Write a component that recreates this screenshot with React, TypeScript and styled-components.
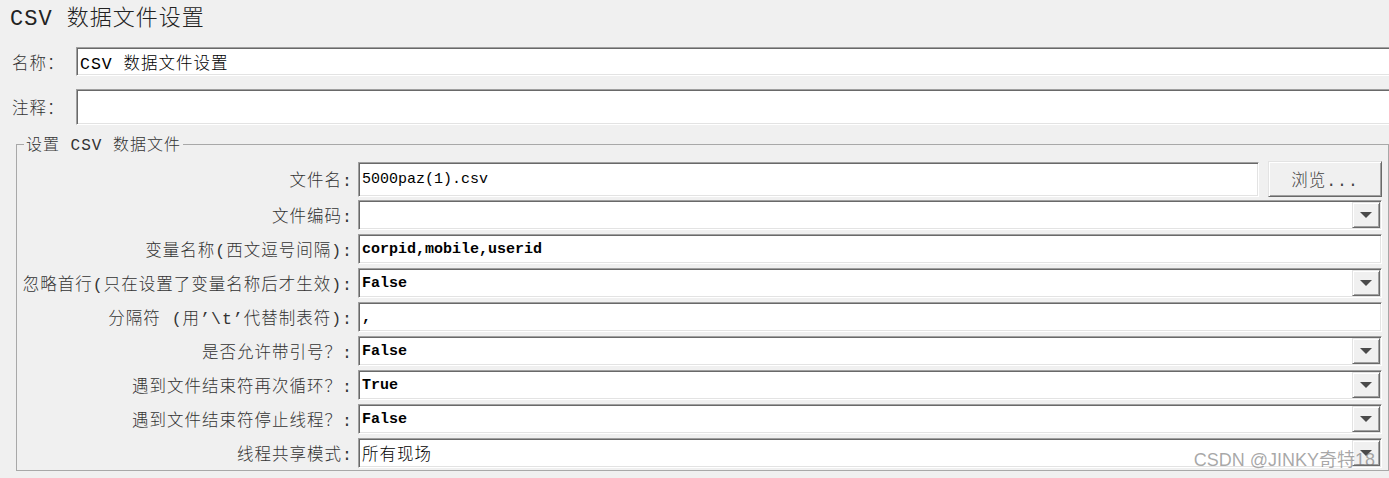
import React from "react";
import styled, { createGlobalStyle } from "styled-components";

const GlobalStyle = createGlobalStyle`
  html, body {
    margin: 0;
    padding: 0;
    background: #f0f0f0;
    overflow: hidden;
  }
  body {
    font-family: "Liberation Mono", "Noto Sans CJK SC", monospace;
  }
`;

const Page = styled.div`
  position: relative;
  width: 1389px;
  height: 478px;
  overflow: hidden;
  box-sizing: border-box;
  padding-top: 6px;
  background: #f0f0f0;
  color: #222;
`;

const Title = styled.h1`
  margin: 0 0 0 10px;
  font-size: 22px;
  line-height: 28px;
  font-weight: 300;
  letter-spacing: 1px;
  color: #222;
`;

const TopRow = styled.div`
  display: flex;
  align-items: center;
  margin-top: 13px;
  margin-right: -8px;
  padding-left: 12px;
`;

const TopLabel = styled.span`
  width: 64px;
  flex: none;
  font-size: 16.5px;
  font-weight: 300;
  letter-spacing: 1px;
  color: #333;
  white-space: nowrap;
`;

const Field = styled.div<{ $h: number }>`
  flex: 1;
  min-width: 0;
  height: ${(p) => p.$h}px;
  box-sizing: border-box;
  display: flex;
  align-items: center;
  padding: 1px 1px 1px 3px;
  background: #fff;
  border-top: 1px solid #a0a0a0;
  border-left: 1px solid #a0a0a0;
  border-right: 1px solid #fff;
  border-bottom: 1px solid #fff;
  box-shadow: inset 1px 1px 0 #696969, inset -1px -1px 0 #e3e3e3;
`;

const Value = styled.span<{ $bold?: boolean; $cjk?: boolean }>`
  flex: 1;
  min-width: 0;
  white-space: nowrap;
  overflow: hidden;
  color: #000;
  font-size: ${(p) => (p.$cjk ? "16.5px" : "15px")};
  letter-spacing: ${(p) => (p.$cjk ? "1px" : "0")};
  font-weight: ${(p) => (p.$bold ? 700 : p.$cjk ? 300 : 400)};
`;

const Group = styled.fieldset`
  margin: 7px 0 0 16px;
  padding: 5px 6px 2px 0;
  border: 1px solid #a8a8a8;
  min-width: 0;
`;

const Legend = styled.legend`
  margin-left: 7px;
  padding: 4px 2px 0;
  font-size: 16px;
  font-weight: 300;
  line-height: 20px;
  letter-spacing: 1px;
  color: #333;
`;

const Rows = styled.div`
  display: flex;
  flex-direction: column;
  gap: 4px;
`;

const Row = styled.div<{ $h?: number; $gapAfter?: number }>`
  display: flex;
  align-items: center;
  gap: 5px;
  height: ${(p) => p.$h ?? 30}px;
  margin-bottom: ${(p) => (p.$gapAfter !== undefined ? p.$gapAfter - 4 : 0)}px;
`;

const Label = styled.span`
  width: 336px;
  flex: none;
  text-align: right;
  font-size: 16.5px;
  font-weight: 300;
  letter-spacing: 1px;
  color: #333;
  white-space: nowrap;
`;

const ArrowButton = styled.span`
  flex: none;
  width: 28px;
  align-self: stretch;
  box-sizing: border-box;
  display: flex;
  align-items: center;
  justify-content: center;
  background: #f0f0f0;
  border-top: 1px solid #e3e3e3;
  border-left: 1px solid #e3e3e3;
  border-right: 1px solid #696969;
  border-bottom: 1px solid #696969;
  box-shadow: inset 1px 1px 0 #fff, inset -1px -1px 0 #a0a0a0;

  &::after {
    content: "";
    width: 0;
    height: 0;
    border-left: 6px solid transparent;
    border-right: 6px solid transparent;
    border-top: 6px solid #4a4a4a;
  }
`;

const BrowseButton = styled.button`
  flex: none;
  width: 114px;
  height: 36px;
  margin-left: 4px;
  box-sizing: border-box;
  padding: 0;
  font-family: inherit;
  font-size: 16.5px;
  font-weight: 300;
  letter-spacing: 1px;
  color: #444;
  background: #f0f0f0;
  border-top: 1px solid #e3e3e3;
  border-left: 1px solid #e3e3e3;
  border-right: 1px solid #696969;
  border-bottom: 1px solid #696969;
  box-shadow: inset 1px 1px 0 #fff, inset -1px -1px 0 #a0a0a0;
`;

const Watermark = styled.div`
  position: absolute;
  right: 14px;
  bottom: 7px;
  font-family: "Liberation Sans", "Noto Sans CJK SC", sans-serif;
  font-size: 18px;
  line-height: 22px;
  color: rgba(110, 110, 110, 0.6);
  pointer-events: none;
`;

type Item = {
  label: string;
  value?: string;
  combo?: boolean;
  bold?: boolean;
  cjk?: boolean;
};

const items: Item[] = [
  { label: "文件编码:", combo: true },
  { label: "变量名称(西文逗号间隔):", value: "corpid,mobile,userid", bold: true },
  { label: "忽略首行(只在设置了变量名称后才生效):", value: "False", combo: true, bold: true },
  { label: "分隔符 (用’\\t’代替制表符):", value: ",", bold: true },
  { label: "是否允许带引号？:", value: "False", combo: true, bold: true },
  { label: "遇到文件结束符再次循环？:", value: "True", combo: true, bold: true },
  { label: "遇到文件结束符停止线程？:", value: "False", combo: true, bold: true },
  { label: "线程共享模式:", value: "所有现场", combo: true, cjk: true },
];

export default function App() {
  return (
    <Page>
      <GlobalStyle />
      <Title>CSV 数据文件设置</Title>
      <TopRow>
        <TopLabel>名称：</TopLabel>
        <Field $h={29}>
          <Value $cjk>CSV 数据文件设置</Value>
        </Field>
      </TopRow>
      <TopRow>
        <TopLabel>注释：</TopLabel>
        <Field $h={36} />
      </TopRow>
      <Group>
        <Legend>设置 CSV 数据文件</Legend>
        <Rows>
          <Row $h={36} $gapAfter={3}>
            <Label>文件名:</Label>
            <Field $h={35}>
              <Value>5000paz(1).csv</Value>
            </Field>
            <BrowseButton>浏览...</BrowseButton>
          </Row>
          {items.map((it) => (
            <Row key={it.label}>
              <Label>{it.label}</Label>
              <Field $h={30}>
                <Value $bold={it.bold} $cjk={it.cjk}>
                  {it.value ?? ""}
                </Value>
                {it.combo ? <ArrowButton /> : null}
              </Field>
            </Row>
          ))}
        </Rows>
      </Group>
      <Watermark>CSDN @JINKY奇特18</Watermark>
    </Page>
  );
}
